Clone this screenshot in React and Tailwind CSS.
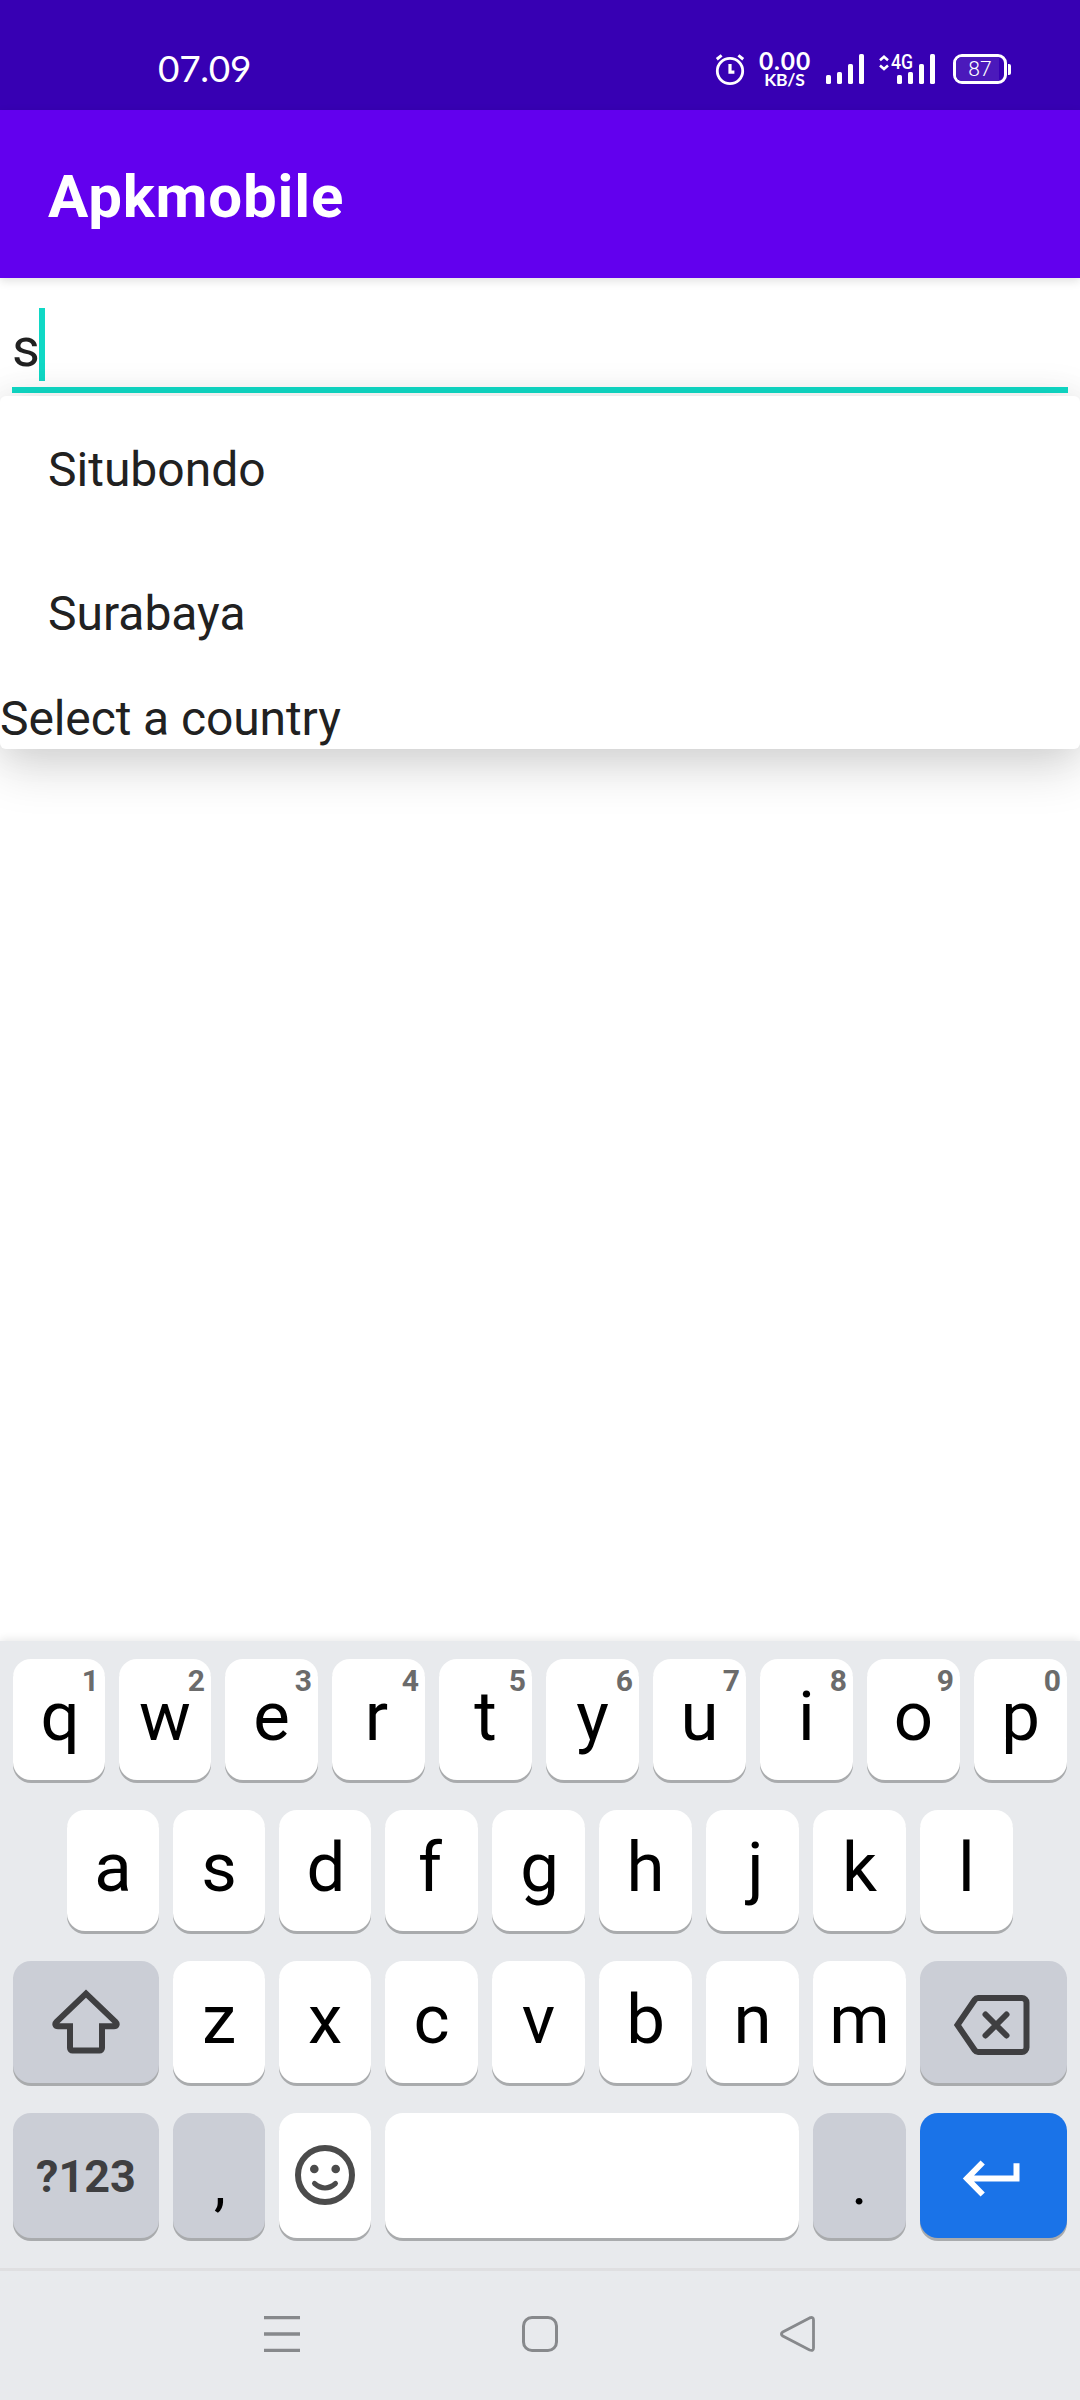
const ROW_ONE = [["q", 1], ["w", 2], ["e", 3], ["r", 4], ["t", 5], ["y", 6], ["u", 7], ["i", 8], ["o", 9], ["p", 0]];
const ROW_TWO = ["a", "s", "d", "f", "g", "h", "j", "k", "l"];
const ROW_THREE = ["z", "x", "c", "v", "b", "n", "m"];

const TONES = {
  light: "bg-white",
  gray: "bg-[#cbced6]",
  blue: "bg-[#1a73e8]",
};

// Optical centring for glyphs with uneven side bearings
const NUDGE = {
  q: "translate-x-[1px]",
  d: "translate-x-[1px]",
  r: "-translate-x-[2px]",
  f: "-translate-x-[1.5px]",
  j: "translate-x-[3px]",
  g: "translate-x-[1px]",
};

function Key({ tone = "light", className = "", children }) {
  return (
    <div
      className={`relative flex min-w-0 items-center justify-center rounded-[18px] shadow-[0_3px_0_#a9abad] ${TONES[tone]} ${className}`}
    >
      {children}
    </div>
  );
}

function Letter({ children }) {
  return <span className={`-mt-[5px] text-[69px] leading-[80px] text-black ${NUDGE[children] || ""}`}>{children}</span>;
}

function AlarmIcon() {
  return (
    <svg width="30" height="34" viewBox="0 0 30 34" fill="none" stroke="#fff">
      <circle cx="15" cy="19" r="12.7" strokeWidth="2.8" />
      <path d="M1.8 7.2 6.6 3.4M28.2 7.2 23.4 3.4" strokeWidth="3" />
      <path d="M15 12v8.2h4.4" strokeWidth="3.2" />
    </svg>
  );
}

function SignalIcon() {
  return (
    <svg width="38" height="30" viewBox="0 0 38 30" fill="#fff">
      <rect x="0" y="21" width="5" height="9" rx="1.6" />
      <rect x="11" y="18" width="5" height="12" rx="1.6" />
      <rect x="22" y="10" width="5" height="20" rx="1.6" />
      <rect x="33" y="0" width="5" height="30" rx="1.6" />
    </svg>
  );
}

function StatusBar() {
  return (
    <div className="flex h-[110px] items-start bg-[#3700b3] text-white">
      <span className="ml-[158px] mt-[45px] w-[94px] font-['Lato',sans-serif] text-[37px] leading-[46px] tracking-[-0.3px]">07.09</span>
      <div className="ml-[463px] mt-[52px]">
        <AlarmIcon />
      </div>
      <div className="ml-[12px] mt-[50px] flex w-[55px] flex-col items-center font-['Lato',sans-serif] font-bold">
        <span className="-mr-[1px] text-[24.5px] leading-[21px] tracking-[0.9px]">0.00</span>
        <span className="text-[17.5px] leading-[18px] tracking-[-0.2px]">KB/S</span>
      </div>
      <div className="ml-[14px] mt-[54px]">
        <SignalIcon />
      </div>
      <div className="relative ml-[33px] mt-[54px]">
        <SignalIcon />
        <span className="absolute -left-[6px] -top-[3px] origin-left scale-x-[0.86] text-[20.5px] font-medium leading-[22px]">
          4G
        </span>
        <svg className="absolute -left-[18px] top-[1px]" width="10" height="16" viewBox="0 0 10 16" fill="none" stroke="#fff" strokeWidth="2.6">
          <path d="M1 5.2 5 1.8l4 3.4M1 10.6 5 14l4-3.4" />
        </svg>
      </div>
      <div className="ml-[18px] mt-[54px] flex items-center">
        <div className="flex h-[30px] w-[54px] items-center rounded-[9px] border-[3px] border-white">
          <div className="flex h-full w-[43px] items-center justify-center rounded-l-[6px] bg-[#4b19bb] pl-[5px]">
            <span className="text-[21px] font-light leading-[24px]">87</span>
          </div>
        </div>
        <div className="ml-[1px] h-[11px] w-[3px] rounded-r-[2px] bg-white" />
      </div>
    </div>
  );
}

function Suggestions() {
  return (
    <div className="absolute left-0 top-[118px] h-[353px] w-full rounded-[6px] bg-white text-[48px] text-[#212121] shadow-[0_20px_50px_rgba(0,0,0,0.14),0_0_40px_rgba(0,0,0,0.09)]">
      <div className="flex h-[144px] items-center pl-12 pt-[4px]">Situbondo</div>
      <div className="flex h-[144px] items-center pl-12 pt-[4px]">Surabaya</div>
      <div className="leading-[69px] tracking-[-0.1px]">Select a country</div>
    </div>
  );
}

function Keyboard() {
  return (
    <div className="relative flex flex-col gap-[30px] bg-[#e8eaed] px-[13px] pb-[30px] pt-[18px] shadow-[0_-2px_8px_rgba(0,0,0,0.09)]">
      <div className="grid h-[121px] grid-cols-[92px_92px_repeat(8,93px)] gap-[14px]">
        {ROW_ONE.map(([letter, digit]) => (
          <Key key={letter}>
            <Letter>{letter}</Letter>
            <span className="absolute right-[6px] top-[6px] text-[30px] font-bold leading-[32px] text-[#6b6b6b]">{digit}</span>
          </Key>
        ))}
      </div>
      <div className="grid h-[121px] grid-cols-[92px_92px_92px_repeat(6,93px)] gap-[14px] px-[54px]">
        {ROW_TWO.map((letter) => (
          <Key key={letter}>
            <Letter>{letter}</Letter>
          </Key>
        ))}
      </div>
      <div className="grid h-[122px] grid-cols-[146px_92px_92px_repeat(5,93px)_147px] gap-[14px]">
        <Key tone="gray">
          <svg width="80" height="80" viewBox="0 0 80 80" fill="none" stroke="#3f3f41" strokeWidth="6">
            <path d="M40 11.7 10.5 39.8c-2.2 2.2-1 4.5 1.5 4.5h12V66a2.5 2.5 0 0 0 2.5 2.5h27a2.5 2.5 0 0 0 2.5-2.5V44.3h12c2.5 0 3.7-2.3 1.5-4.5Z" />
          </svg>
        </Key>
        {ROW_THREE.map((letter) => (
          <Key key={letter}>
            <Letter>{letter}</Letter>
          </Key>
        ))}
        <Key tone="gray">
          <svg className="-ml-[2px]" width="90" height="80" viewBox="0 0 90 80" fill="none" stroke="#3f3f41" strokeWidth="6">
            <path d="M30 16h44a4.500 4.500 0 0 1 4.500 4.500v45A4.500 4.500 0 0 1 74 70H30q-2 0-3.200-1.700L9.500 43l17.300-25.300Q28 16 30 16Z" />
            <path d="m37.500 32.500 21 21m0-21-21 21" strokeLinecap="round" />
          </svg>
        </Key>
      </div>
      <div className="grid h-[125px] grid-cols-[146px_92px_92px_414px_93px_147px] gap-[14px]">
        <Key tone="gray">
          <span className="mt-[3px] text-[45px] font-bold leading-[50px] text-[#3f3f41]">?123</span>
        </Key>
        <Key tone="gray">
          <span className="mt-[16px] translate-x-[1px] text-[60px] leading-[70px] text-black">,</span>
        </Key>
        <Key>
          <svg className="-mt-[1px]" width="60" height="60" viewBox="0 0 60 60" fill="none" stroke="#4b4b4b" strokeWidth="6">
            <circle cx="30" cy="30" r="27" />
            <circle cx="19.300" cy="24" r="4.300" fill="#4b4b4b" stroke="none" />
            <circle cx="40.700" cy="24" r="4.300" fill="#4b4b4b" stroke="none" />
            <path d="M19.500 38.500q10.500 9 21 0" strokeWidth="5" strokeLinecap="round" />
          </svg>
        </Key>
        <Key />
        <Key tone="gray">
          <span className="mt-[16px] text-[60px] leading-[70px] text-black">.</span>
        </Key>
        <Key tone="blue">
          <svg className="-ml-[2px]" width="70" height="50" viewBox="0 0 70 50" fill="none" stroke="#fff" strokeWidth="6">
            <path d="M58.500 12.200v15.300H9M24.700 11.500 9 27.500l15.700 16" />
          </svg>
        </Key>
      </div>
    </div>
  );
}

function NavBar() {
  return (
    <div className="relative flex h-[132px] items-start justify-between border-t-[3px] border-[#dfdfe1] bg-[#e8eaed] pl-[264px] pr-[264px] pt-[45px]">
      <svg width="36" height="36" viewBox="0 0 36 36" stroke="#87898c" strokeWidth="3.300">
        <path d="M0 1.700h36M0 18h36M0 34.300h36" />
      </svg>
      <svg width="36" height="36" viewBox="0 0 36 36" fill="none" stroke="#87898c" strokeWidth="3">
        <rect x="1.500" y="1.500" width="33" height="33" rx="8.500" />
      </svg>
      <svg width="36" height="36" viewBox="0 0 36 36" fill="none" stroke="#87898c" strokeWidth="2.800">
        <path d="M29.600 1.900 2.800 16q-2.800 2 0 4l26.800 14q3.900 1.400 3.900-2V3.900q0-3.400-3.900-2Z" />
      </svg>
    </div>
  );
}

export default function App() {
  return (
    <div className="flex h-[2400px] w-[1080px] flex-col overflow-hidden bg-white font-['Roboto',sans-serif]">
      <StatusBar />
      <div className="z-10 flex h-[168px] items-center bg-[#6200ee] pl-12 pt-[5px] text-[60px] font-bold tracking-[0.8px] text-white shadow-[0_3px_9px_rgba(0,0,0,0.12)]">
        Apkmobile
      </div>
      <div className="relative flex-1 bg-white">
        <div className="mx-3 h-[115px] border-b-[6px] border-[#10dcc8] pt-[30px]">
          <div className="flex h-[73px] items-start text-[54px] leading-[73px] text-[#212121]">
            <span className="mt-[3px] w-[27px]">s</span>
            <span className="h-[73px] w-[6px] bg-[#10d8c5]" />
          </div>
        </div>
        <Suggestions />
      </div>
      <Keyboard />
      <NavBar />
    </div>
  );
}
